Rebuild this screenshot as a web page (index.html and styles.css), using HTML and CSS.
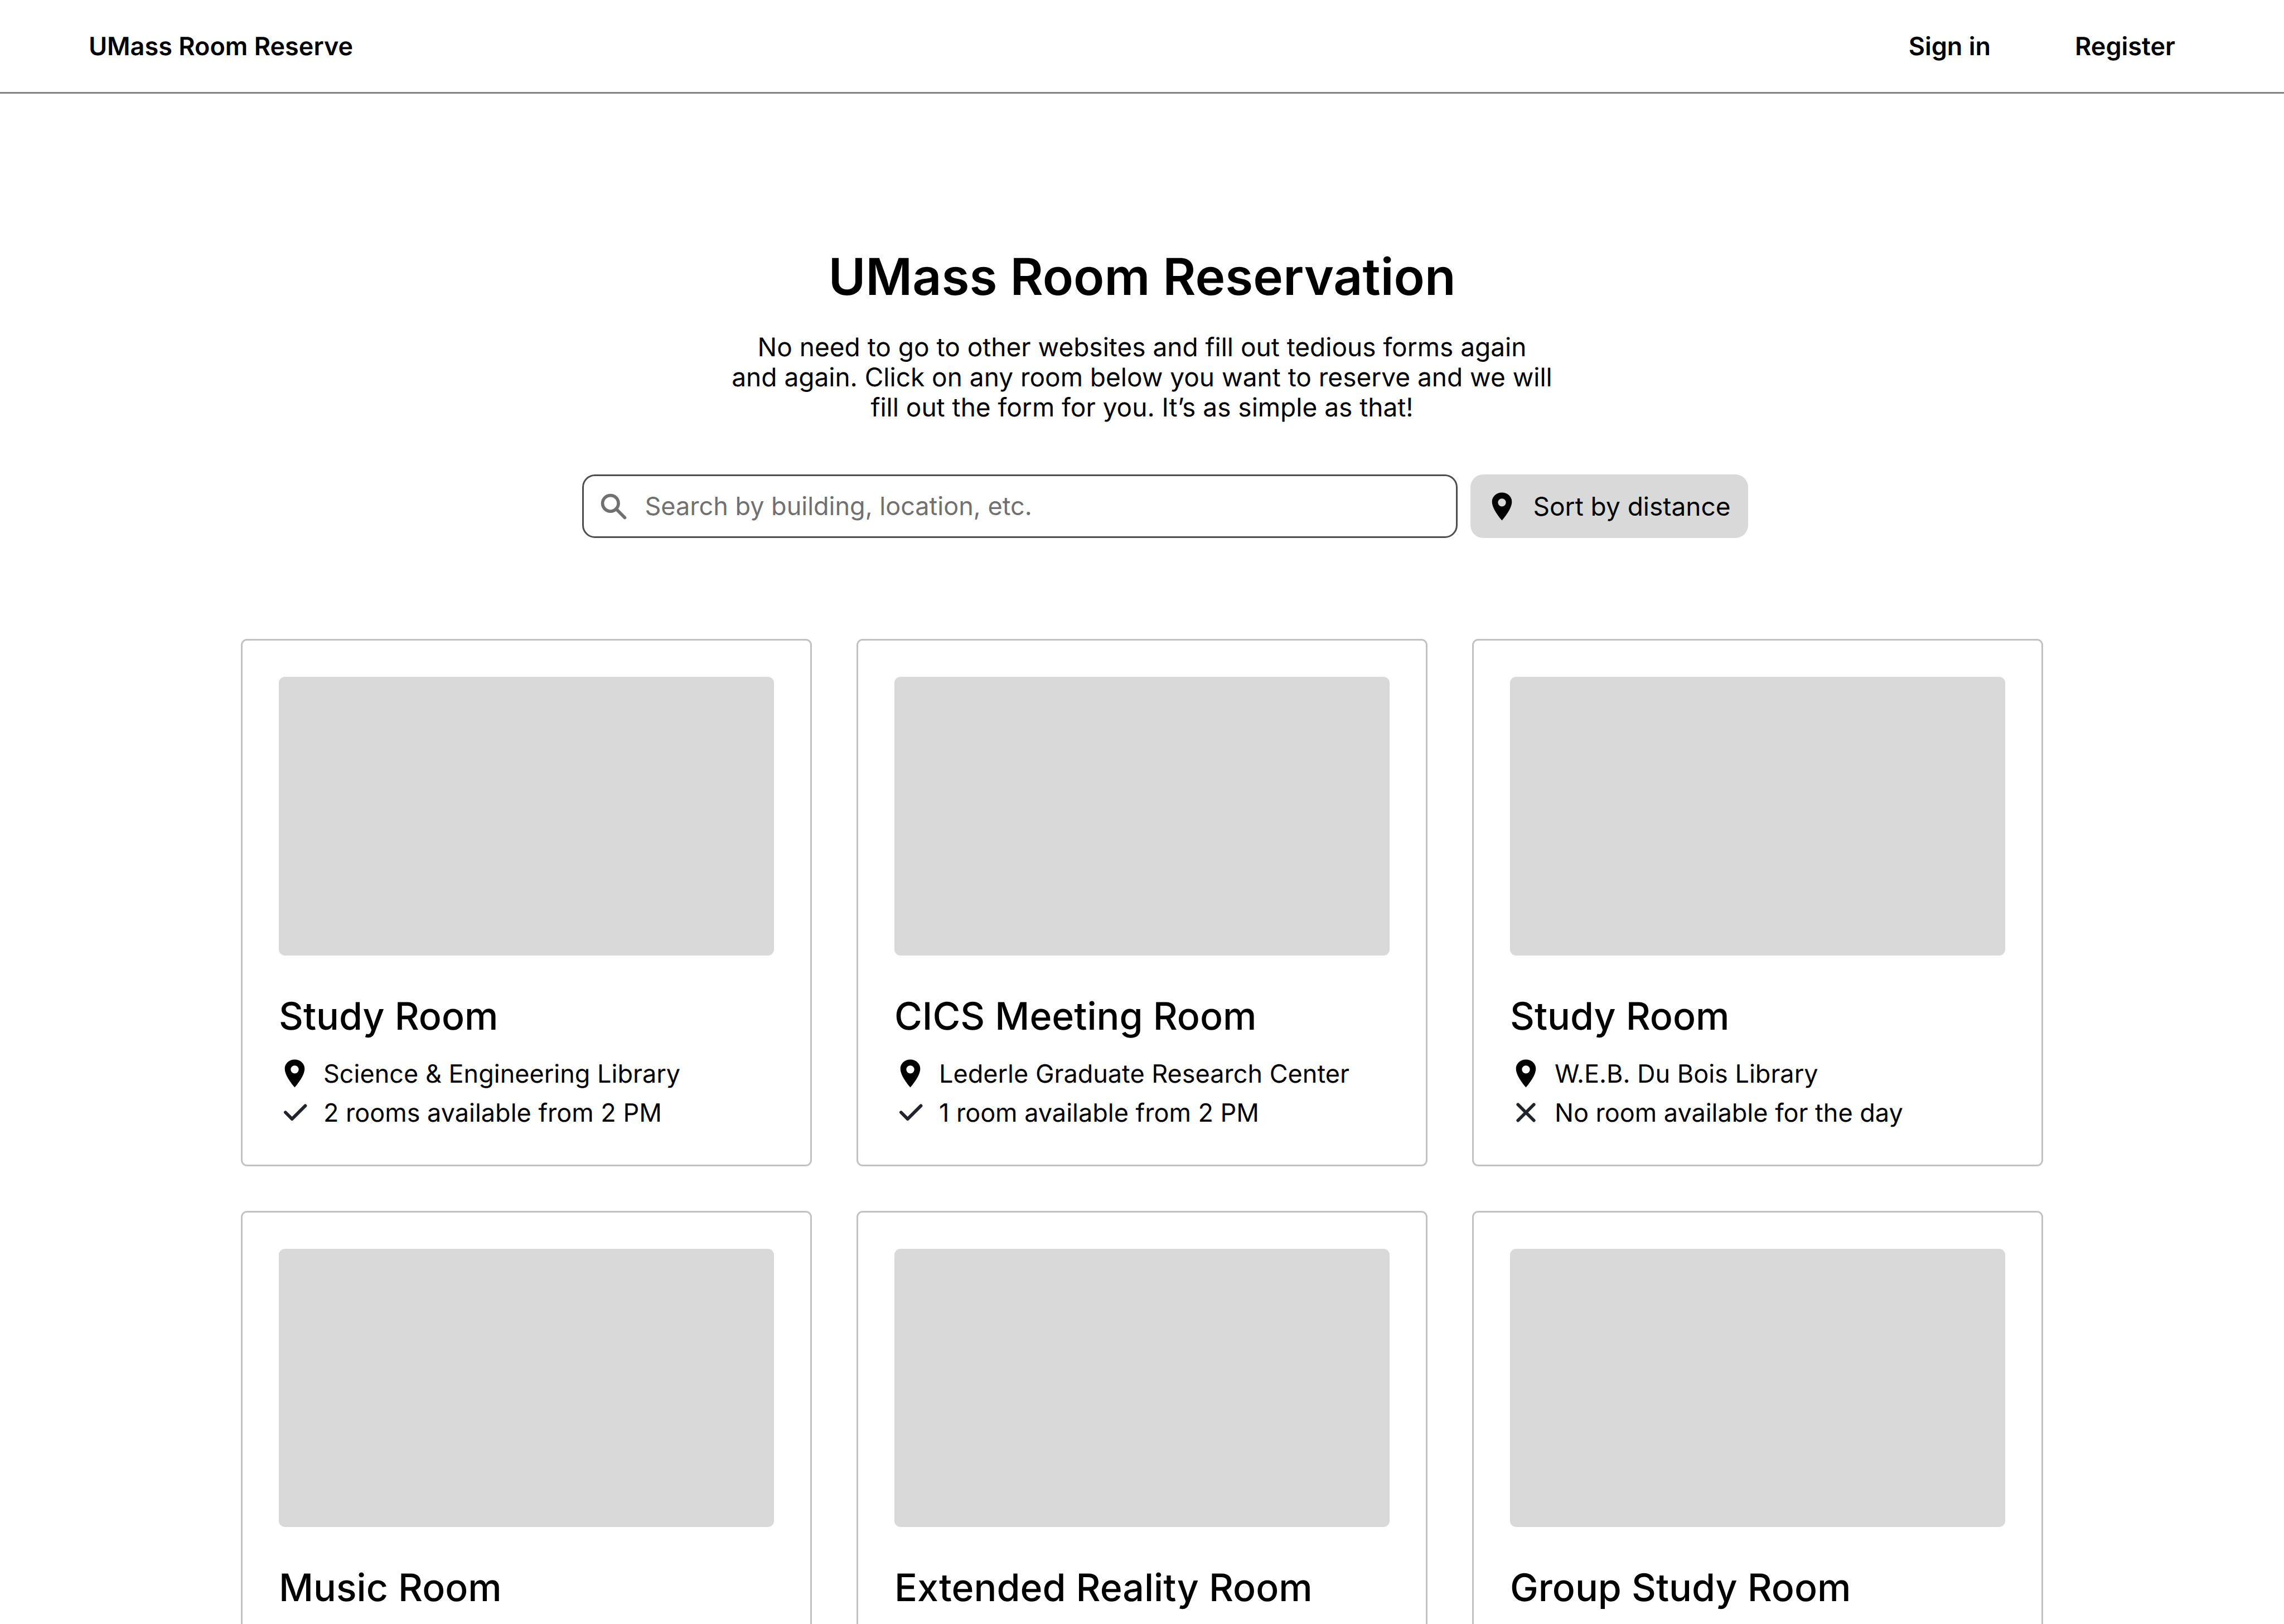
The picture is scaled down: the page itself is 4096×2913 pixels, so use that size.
FILE: index.html
```html
<!DOCTYPE html>
<html lang="en">
<head>
<meta charset="utf-8">
<meta name="viewport" content="width=device-width, initial-scale=1">
<title>UMass Room Reserve</title>
<link rel="stylesheet" href="styles.css">
</head>
<body>
<svg class="sprite" aria-hidden="true">
  <symbol id="pin" viewBox="0 0 16 16"><path fill-rule="evenodd" d="M8 1C5.200 1 3 3 3 5.600c0 2.400 2 6 5 9.400 3-3.400 5-7 5-9.400C13 3 10.800 1 8 1zm0 3a2 2 0 1 1 0 4 2 2 0 0 1 0-4z"/></symbol>
  <symbol id="check" viewBox="0 0 80 80"><path d="M16.700 39.700 33.300 56.300 66.700 23" fill="none" stroke="currentColor" stroke-width="8" stroke-linecap="round" stroke-linejoin="round"/></symbol>
  <symbol id="cross" viewBox="0 0 80 80"><path d="M20 20 60 60M60 20 20 60" fill="none" stroke="currentColor" stroke-width="8" stroke-linecap="round"/></symbol>
  <symbol id="search" viewBox="0 0 80 80"><path d="M46 46 68 68" fill="none" stroke="currentColor" stroke-width="8" stroke-linecap="round"/><circle cx="32" cy="32" r="20" fill="none" stroke="currentColor" stroke-width="8"/></symbol>
</svg>
<header class="site-header">
  <a class="brand" href="#">UMass Room Reserve</a>
  <nav class="account-nav">
    <a href="#">Sign in</a>
    <a href="#">Register</a>
  </nav>
</header>
<main>
  <section class="hero">
    <h1>UMass Room Reservation</h1>
    <p>No need to go to other websites and fill out tedious forms again<br>and again. Click on any room below you want to reserve and we will<br>fill out the form for you. It’s as simple as that!</p>
    <form class="search-form">
      <label class="search-box">
        <svg class="icon" aria-hidden="true"><use href="#search"/></svg>
        <input type="search" aria-label="Search rooms" placeholder="Search by building, location, etc.">
      </label>
      <button class="sort-button" type="button"><svg class="icon" aria-hidden="true"><use href="#pin"/></svg>Sort by distance</button>
    </form>
  </section>
  <section class="rooms">
    <article class="card">
      <div class="photo"></div>
      <h2>Study Room</h2>
      <ul class="details">
        <li><svg class="icon" aria-hidden="true"><use href="#pin"/></svg>Science &amp; Engineering Library</li>
        <li><svg class="icon status" aria-hidden="true"><use href="#check"/></svg>2 rooms available from 2 PM</li>
      </ul>
    </article>
    <article class="card">
      <div class="photo"></div>
      <h2>CICS Meeting Room</h2>
      <ul class="details">
        <li><svg class="icon" aria-hidden="true"><use href="#pin"/></svg>Lederle Graduate Research Center</li>
        <li><svg class="icon status" aria-hidden="true"><use href="#check"/></svg>1 room available from 2 PM</li>
      </ul>
    </article>
    <article class="card">
      <div class="photo"></div>
      <h2>Study Room</h2>
      <ul class="details">
        <li><svg class="icon" aria-hidden="true"><use href="#pin"/></svg>W.E.B. Du Bois Library</li>
        <li><svg class="icon status" aria-hidden="true"><use href="#cross"/></svg>No room available for the day</li>
      </ul>
    </article>
    <article class="card">
      <div class="photo"></div>
      <h2>Music Room</h2>
    </article>
    <article class="card">
      <div class="photo"></div>
      <h2>Extended Reality Room</h2>
    </article>
    <article class="card">
      <div class="photo"></div>
      <h2>Group Study Room</h2>
    </article>
  </section>
</main>
</body>
</html>
```
FILE: styles.css
```css
* {
  box-sizing: border-box;
}

html {
  overflow: hidden;
}

body {
  margin: 0;
  height: 100vh;
  overflow: hidden;
  background: #fff;
  color: #000;
  font: 400 45px/54px Inter, "Liberation Sans", sans-serif;
  text-rendering: geometricPrecision;
}

.sprite {
  display: none;
}

.icon {
  flex: none;
  width: 57px;
  height: 57px;
  fill: currentColor;
}

.site-header {
  display: flex;
  align-items: center;
  justify-content: space-between;
  padding: 56px 195px 55px 159px;
  border-bottom: 3px solid #7f7f7f;
  font-weight: 600;
}

.site-header a {
  color: inherit;
  text-decoration: none;
}

.account-nav {
  display: flex;
  gap: 151px;
}

.hero {
  display: flex;
  flex-direction: column;
  align-items: center;
  padding-top: 273px;
}

h1 {
  margin: 0;
  font-size: 91px;
  font-weight: 600;
  line-height: 110px;
}

.hero p {
  margin: 45px 0 0;
  font-size: 46px;
  text-align: center;
}

.search-form {
  display: flex;
  gap: 23px;
  margin: 93px 0 0 82px;
}

.search-box {
  display: flex;
  align-items: center;
  gap: 28px;
  width: 1570px;
  height: 114px;
  padding: 0 25px;
  border: 3px solid #4d4d4d;
  border-radius: 23px;
  color: #707070;
}

.search-box input {
  flex: 1;
  min-width: 0;
  padding: 0;
  border: 0;
  outline: 0;
  background: none;
  color: #000;
  font: inherit;
}

.search-box input::placeholder {
  color: #707070;
  opacity: 1;
}

.sort-button {
  display: flex;
  align-items: center;
  gap: 28px;
  min-width: 498px;
  height: 114px;
  padding: 0 28px;
  border: 0;
  border-radius: 23px;
  background: #d9d9d9;
  color: inherit;
  font: inherit;
  font-size: 46px;
}

.rooms {
  display: grid;
  grid-template-columns: repeat(3, 1fr);
  gap: 80px;
  padding: 181px 432px 80px;
}

.card {
  padding: 65px;
  border: 3px solid #c2c2c2;
  border-radius: 11px;
}

.photo {
  aspect-ratio: 16 / 9;
  border-radius: 11px;
  background: #d9d9d9;
}

h2 {
  margin: 68px 0 0;
  font-size: 68px;
  font-weight: 500;
  line-height: 82px;
}

.details {
  display: grid;
  gap: 13px;
  margin: 33px 0 0;
  padding: 0;
  list-style: none;
}

.details li {
  display: flex;
  align-items: center;
  gap: 23px;
  line-height: 57px;
}

.status {
  color: #212529;
}
```
